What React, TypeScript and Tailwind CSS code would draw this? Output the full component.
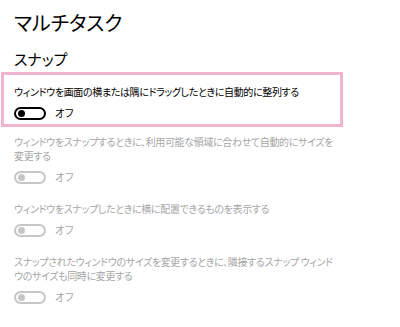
import React from "react";

type Item = {
  label: string;
  on: boolean;
  enabled: boolean;
};

const items: Item[] = [
  {
    label: "ウィンドウを画面の横または隅にドラッグしたときに自動的に整列する",
    on: false,
    enabled: true,
  },
  {
    label:
      "ウィンドウをスナップするときに、利用可能な領域に合わせて自動的にサイズを変更する",
    on: false,
    enabled: false,
  },
  {
    label: "ウィンドウをスナップしたときに横に配置できるものを表示する",
    on: false,
    enabled: false,
  },
  {
    label:
      "スナップされたウィンドウのサイズを変更するときに、隣接するスナップ ウィンドウのサイズも同時に変更する",
    on: false,
    enabled: false,
  },
];

function Toggle({ enabled }: { enabled: boolean }) {
  return (
    <div
      className={`flex h-[13px] w-[32px] items-center rounded-full border-2 px-[2px] ${
        enabled ? "border-black" : "border-[#c6c6c6]"
      }`}
    >
      <span
        className={`h-[7px] w-[7px] rounded-full ${
          enabled ? "bg-black" : "bg-[#c6c6c6]"
        }`}
      />
    </div>
  );
}

function Setting({ item }: { item: Item }) {
  const textColor = item.enabled ? "text-black" : "text-[#a6a6a6]";
  return (
    <div className="flex flex-col">
      <p className={`text-[10px] leading-[14px] tracking-[-0.35px] ${textColor}`}>
        {item.label}
      </p>
      <div className="mt-[7px] flex h-[14px] items-center gap-[9px]">
        <Toggle enabled={item.enabled} />
        <span className={`text-[10.5px] leading-[14px] ${textColor}`}>
          {item.on ? "オン" : "オフ"}
        </span>
      </div>
    </div>
  );
}

export default function App() {
  return (
    <div
      className="h-[327px] w-[400px] bg-white pt-[9px]"
      style={{ fontFamily: '"Noto Sans CJK JP", sans-serif', fontFeatureSettings: '"palt"' }}
    >
      <h1 className="pl-[14px] text-[20px] font-normal leading-[28px] text-black">
        マルチタスク
      </h1>
      <h2 className="mt-[12px] pl-[14px] text-[15px] font-normal leading-[20px] text-black">
        スナップ
      </h2>
      <div className="mt-[3px] w-[343px] pl-[1px]">
        <div className="border-[3px] border-[#f0b4cc] px-[10px] pt-[10px] pb-[4px]">
          <Setting item={items[0]} />
        </div>
      </div>
      <div className="flex w-[339px] flex-col gap-[18px] pl-[14px] pt-[8px]">
        {items.slice(1).map((item) => (
          <Setting key={item.label} item={item} />
        ))}
      </div>
    </div>
  );
}
